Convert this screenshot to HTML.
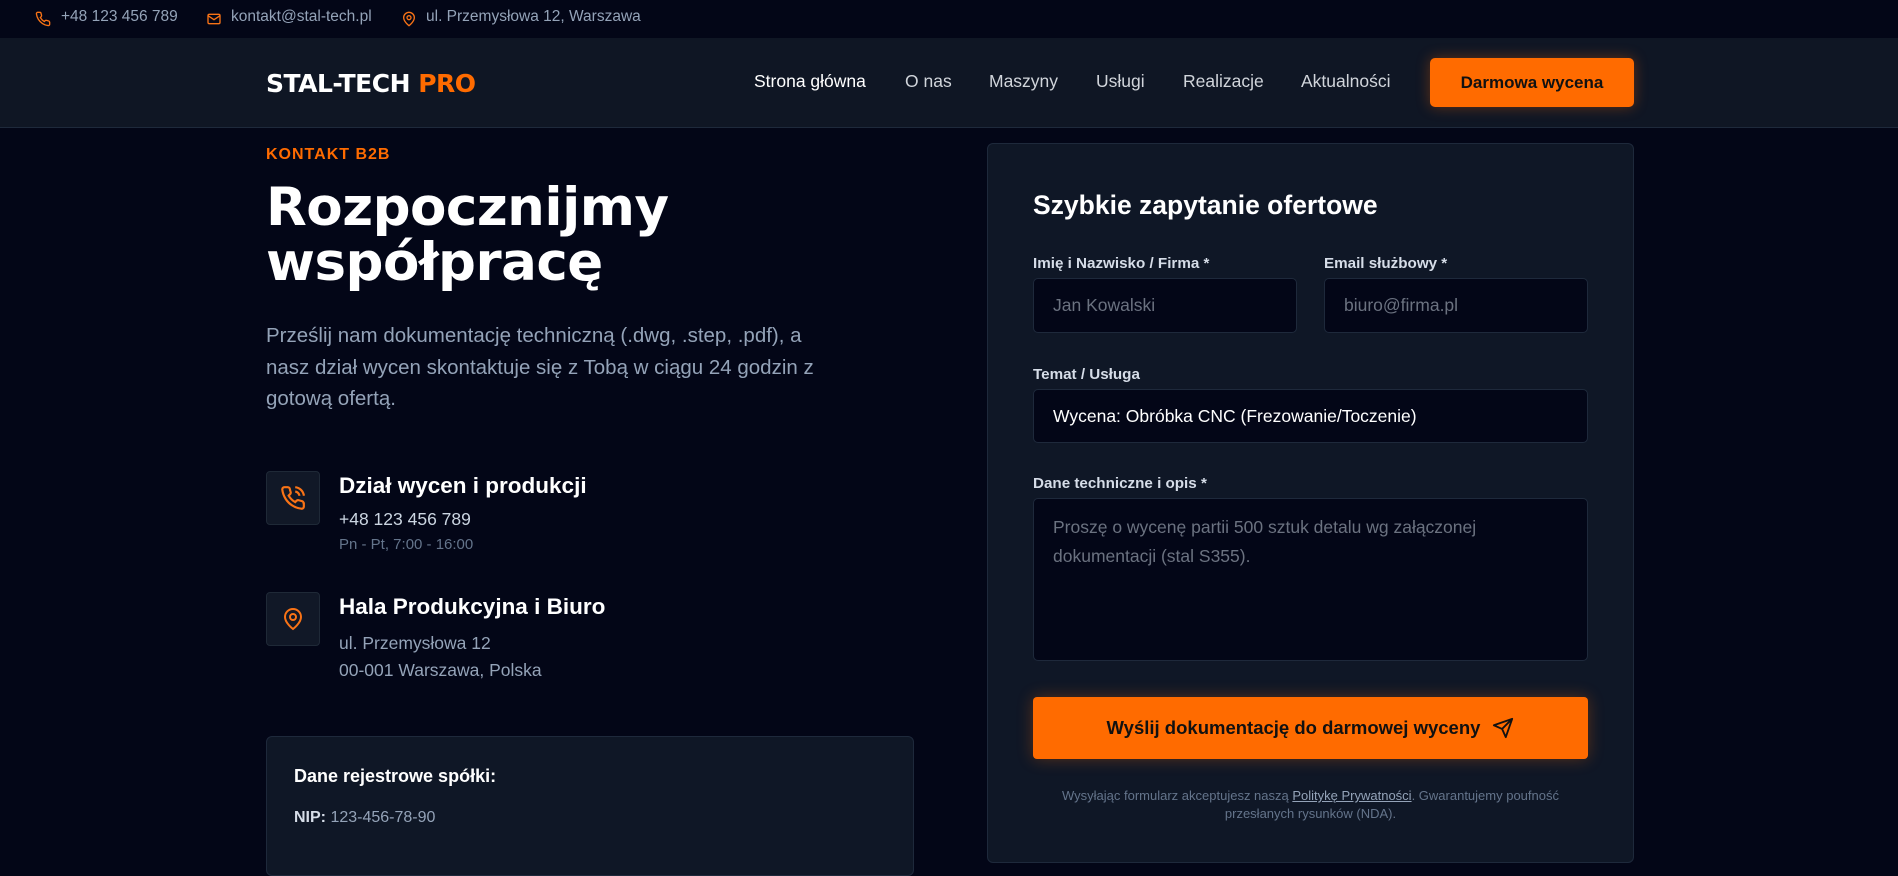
<!DOCTYPE html>
<html><head><meta charset="utf-8"><style>
*{box-sizing:border-box;margin:0;padding:0}
body{width:1898px;height:834px;overflow:hidden;background:#030617;font-family:"Liberation Sans",sans-serif;color:#fff;position:relative}
.abs{position:absolute;white-space:nowrap}
.top{position:absolute;left:0;top:0;width:1898px;height:38px;background:#030617;color:#94a3b8;font-size:15.5px}
.nav{position:absolute;left:0;top:38px;width:1898px;height:90px;background:#0f1624;border-bottom:1px solid #1e293b}
.nav a{position:absolute;top:33px;font-size:17.5px;color:#d1d5db;text-decoration:none}
.btn{position:absolute;left:1430px;top:20px;width:204px;height:49px;background:#ff6b00;border-radius:5px;color:#111;font-weight:bold;font-size:17px;text-align:center;line-height:49px;box-shadow:0 0 14px rgba(255,107,0,.35)}
.ib{position:absolute;left:266px;width:54px;height:54px;background:#111827;border:1px solid #1f2937;border-radius:4px;display:flex;align-items:center;justify-content:center}
.card{position:absolute;background:#0f1726;border:1px solid #1e293b;border-radius:6px}
.lbl{position:absolute;font-size:15.2px;font-weight:bold;color:#d6dde8}
.inp{position:absolute;background:#030617;border:1px solid #1e293b;border-radius:5px;font-size:17.5px;color:#6b7280;padding-left:19px;display:flex;align-items:center}
.dv{font-family:"DejaVu Sans","Liberation Sans",sans-serif}
</style></head><body>
<div class="top">
<svg class="abs" style="left:35px;top:11px" width="16" height="16" viewBox="0 0 24 24" fill="none" stroke="#f97316" stroke-width="2"><path d="M22 16.9v3a2 2 0 0 1-2.2 2 19.8 19.8 0 0 1-8.6-3.1 19.5 19.5 0 0 1-6-6A19.8 19.8 0 0 1 2.1 4.2 2 2 0 0 1 4.1 2h3a2 2 0 0 1 2 1.7c.1.9.4 1.8.7 2.7a2 2 0 0 1-.5 2.1L8 9.8a16 16 0 0 0 6 6l1.3-1.3a2 2 0 0 1 2.1-.4c.9.3 1.8.6 2.7.7a2 2 0 0 1 1.7 2z"/></svg>
<span class="abs" style="left:61px;top:8px">+48 123 456 789</span>
<svg class="abs" style="left:206px;top:11px" width="16" height="16" viewBox="0 0 24 24" fill="none" stroke="#f97316" stroke-width="2"><rect x="3" y="5" width="18" height="14" rx="2"/><path d="M3 7l9 6 9-6"/></svg>
<span class="abs" style="left:231px;top:8px">kontakt@stal-tech.pl</span>
<svg class="abs" style="left:401px;top:10px" width="16" height="18" viewBox="0 0 24 24" fill="none" stroke="#f97316" stroke-width="2"><path d="M20 10c0 6-8 12-8 12s-8-6-8-12a8 8 0 0 1 16 0z"/><circle cx="12" cy="10" r="3"/></svg>
<span class="abs" style="left:426px;top:8px">ul. Przemysłowa 12, Warszawa</span>
</div>
<div class="nav">
<div class="abs dv" style="left:266px;top:31px;font-size:25px;font-weight:bold;letter-spacing:-0.5px">STAL-TECH <span style="color:#ff6b00">PRO</span></div>
<a style="left:754px;color:#fff">Strona główna</a>
<a style="left:905px">O nas</a>
<a style="left:989px">Maszyny</a>
<a style="left:1096px">Usługi</a>
<a style="left:1183px">Realizacje</a>
<a style="left:1301px">Aktualności</a>
<div class="btn">Darmowa wycena</div>
</div>

<div class="abs" style="left:266px;top:146px;font-size:16px;font-weight:bold;color:#ff6b00;letter-spacing:1px">KONTAKT B2B</div>
<div class="abs dv" style="left:266px;top:180px;font-size:53px;font-weight:bold;line-height:55px;letter-spacing:-0.5px">Rozpocznijmy<br>współpracę</div>
<div class="abs" style="left:266px;top:320px;font-size:20.5px;line-height:31.5px;color:#94a3b8">Prześlij nam dokumentację techniczną (.dwg, .step, .pdf), a<br>nasz dział wycen skontaktuje się z Tobą w ciągu 24 godzin z<br>gotową ofertą.</div>

<div class="ib" style="top:471px"><svg width="26" height="26" viewBox="0 0 24 24" fill="none" stroke="#f97316" stroke-width="2"><path d="M22 16.9v3a2 2 0 0 1-2.2 2 19.8 19.8 0 0 1-8.6-3.1 19.5 19.5 0 0 1-6-6A19.8 19.8 0 0 1 2.1 4.2 2 2 0 0 1 4.1 2h3a2 2 0 0 1 2 1.7c.1.9.4 1.8.7 2.7a2 2 0 0 1-.5 2.1L8 9.8a16 16 0 0 0 6 6l1.3-1.3a2 2 0 0 1 2.1-.4c.9.3 1.8.6 2.7.7a2 2 0 0 1 1.7 2z"/><path d="M14.05 2a9 9 0 0 1 8 7.94M14.05 6A5 5 0 0 1 18 10"/></svg></div>
<div class="abs" style="left:339px;top:473px;font-size:22.5px;font-weight:bold">Dział wycen i produkcji</div>
<div class="abs" style="left:339px;top:509px;font-size:17.5px;color:#cbd5e1">+48 123 456 789</div>
<div class="abs" style="left:339px;top:536px;font-size:15px;color:#64748b">Pn - Pt, 7:00 - 16:00</div>

<div class="ib" style="top:592px"><svg width="24" height="26" viewBox="0 0 24 24" fill="none" stroke="#f97316" stroke-width="2"><path d="M20 10c0 6-8 12-8 12s-8-6-8-12a8 8 0 0 1 16 0z"/><circle cx="12" cy="10" r="3"/></svg></div>
<div class="abs" style="left:339px;top:594px;font-size:22.5px;font-weight:bold">Hala Produkcyjna i Biuro</div>
<div class="abs" style="left:339px;top:630px;font-size:17.5px;line-height:27px;color:#94a3b8">ul. Przemysłowa 12<br>00-001 Warszawa, Polska</div>

<div class="card" style="left:266px;top:736px;width:648px;height:140px"></div>
<div class="abs" style="left:294px;top:766px;font-size:18px;font-weight:bold">Dane rejestrowe spółki:</div>
<div class="abs" style="left:294px;top:809px;font-size:16px;color:#94a3b8"><b style="color:#d6dde8">NIP:</b> 123-456-78-90</div>

<div class="card" style="left:987px;top:143px;width:647px;height:720px"></div>
<div class="abs" style="left:1033px;top:190px;font-size:26.5px;font-weight:bold">Szybkie zapytanie ofertowe</div>
<div class="lbl" style="left:1033px;top:255px">Imię i Nazwisko / Firma *</div>
<div class="lbl" style="left:1324px;top:255px">Email służbowy *</div>
<div class="inp" style="left:1033px;top:278px;width:264px;height:55px">Jan Kowalski</div>
<div class="inp" style="left:1324px;top:278px;width:264px;height:55px">biuro@firma.pl</div>
<div class="lbl" style="left:1033px;top:366px">Temat / Usługa</div>
<div class="inp" style="left:1033px;top:389px;width:555px;height:54px;color:#fff">Wycena: Obróbka CNC (Frezowanie/Toczenie)</div>
<div class="lbl" style="left:1033px;top:475px">Dane techniczne i opis *</div>
<div class="inp" style="left:1033px;top:498px;width:555px;height:163px;align-items:flex-start;padding-top:14px;line-height:29px">Proszę o wycenę partii 500 sztuk detalu wg załączonej<br>dokumentacji (stal S355).</div>
<div class="abs" style="left:1033px;top:697px;width:555px;height:62px;background:#ff6b00;border-radius:4px;box-shadow:0 0 16px rgba(255,107,0,.3);color:#111;font-weight:bold;font-size:18.5px;display:flex;align-items:center;justify-content:center;gap:12px">Wyślij dokumentację do darmowej wyceny <svg width="22" height="22" viewBox="0 0 24 24" fill="none" stroke="#111" stroke-width="2" stroke-linejoin="round"><path d="M22 2L11 13M22 2l-7 20-4-9-9-4 20-7z"/></svg></div>
<div class="abs" style="left:1033px;top:787px;width:555px;text-align:center;font-size:13px;line-height:18px;color:#64748b;white-space:normal">Wysyłając formularz akceptujesz naszą <u style="color:#94a3b8">Politykę Prywatności</u>. Gwarantujemy poufność<br>przesłanych rysunków (NDA).</div>
</body></html>
